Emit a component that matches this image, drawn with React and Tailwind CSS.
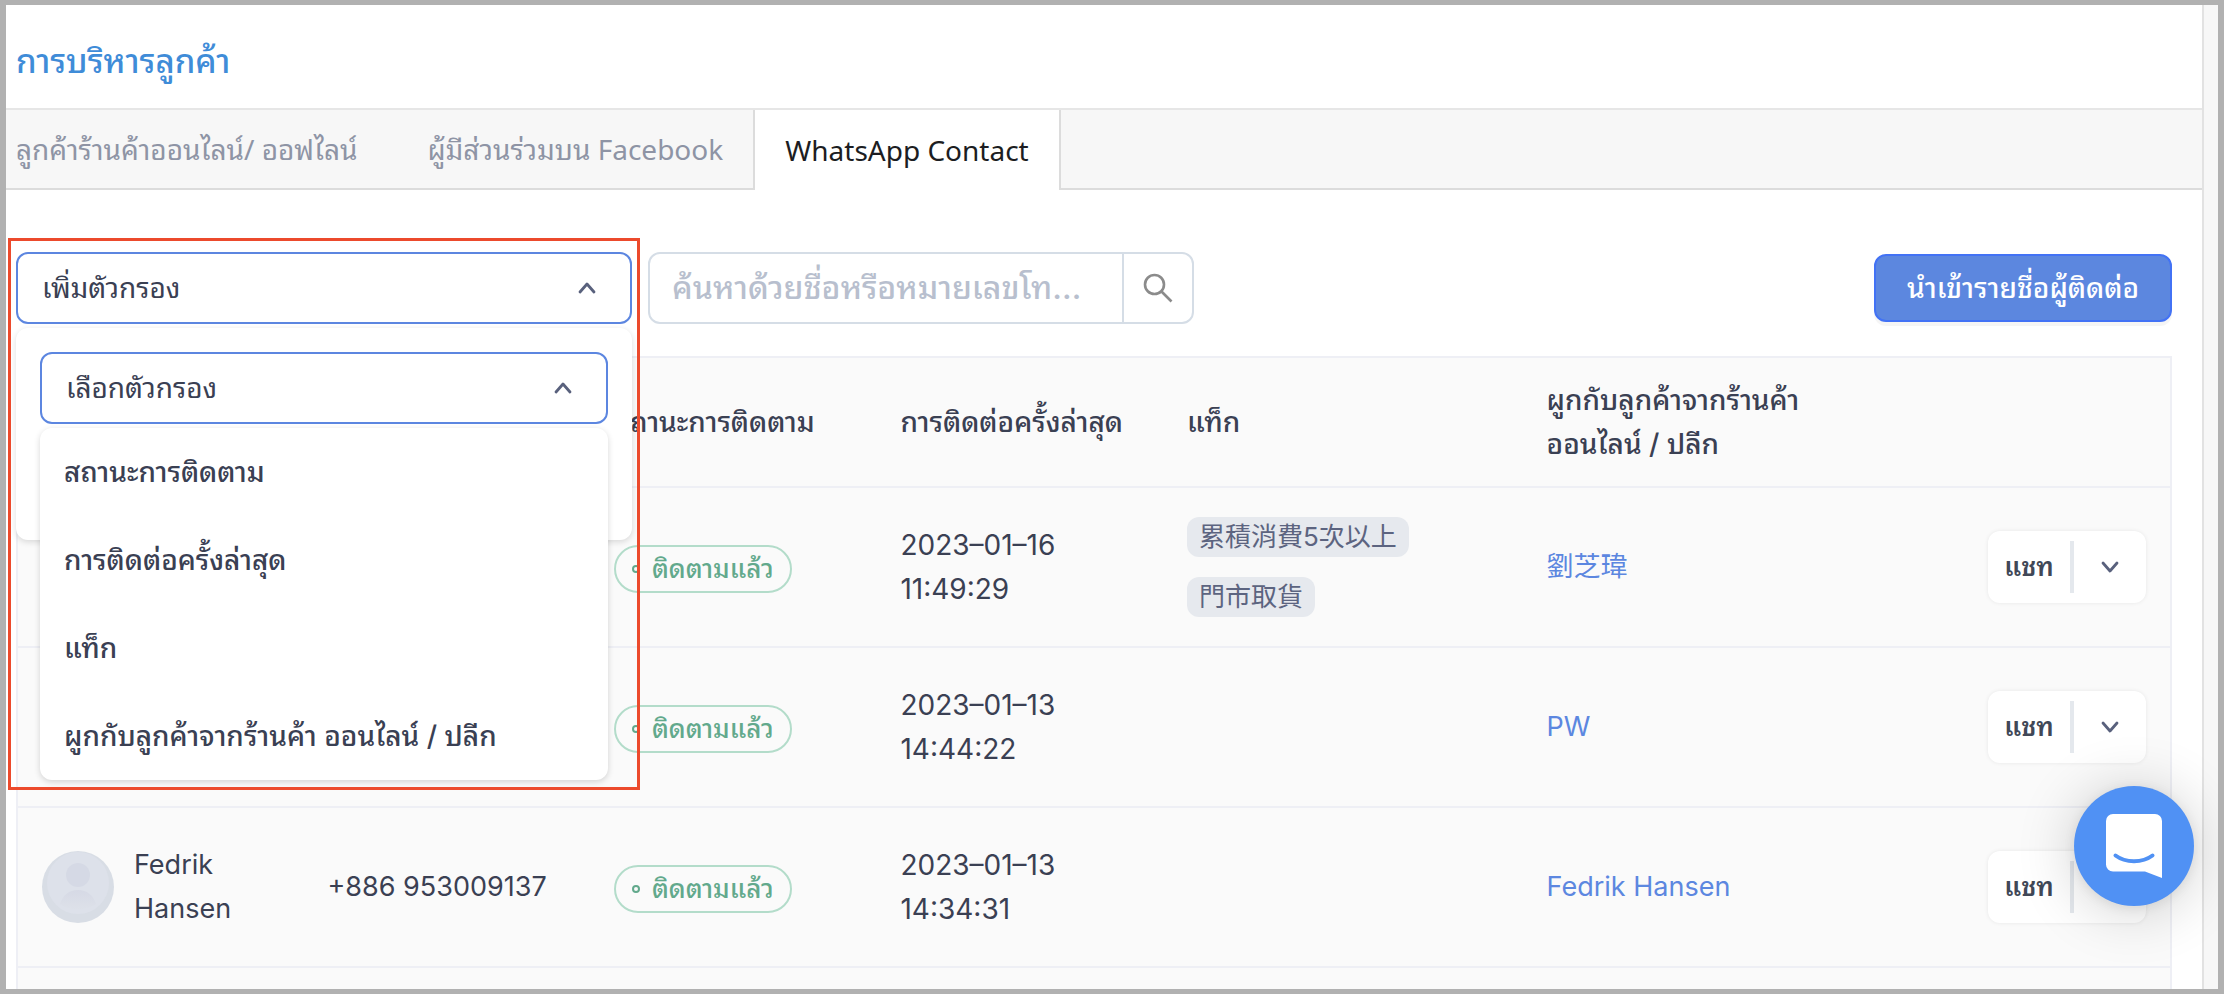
import React from "react";

const tabs = [
  { label: "ลูกค้าร้านค้าออนไลน์/ ออฟไลน์" },
  { label: "ผู้มีส่วนร่วมบน Facebook" },
  { label: "WhatsApp Contact", active: true },
];

const filterOptions = [
  "สถานะการติดตาม",
  "การติดต่อครั้งล่าสุด",
  "แท็ก",
  "ผูกกับลูกค้าจากร้านค้า ออนไลน์ / ปลีก",
];

const contacts = [
  { id: 1, date: "2023–01–16", time: "11:49:29", tags: ["累積消費5次以上", "門市取貨"], link: "劉芝瑋" },
  { id: 2, date: "2023–01–13", time: "14:44:22", tags: [], link: "PW" },
  { id: 3, name: "Fedrik Hansen", phone: "+886 953009137", date: "2023–01–13", time: "14:34:31", tags: [], link: "Fedrik Hansen" },
];

function Chevron({ up }) {
  return (
    <svg viewBox="0 0 18 12" className="h-3 w-[18px] shrink-0" fill="none" stroke="#59617d" strokeWidth="2.8" strokeLinecap="round" strokeLinejoin="round" aria-hidden="true">
      <path d={up ? "M2 10l7-8 7 8" : "M2 2l7 8 7-8"} />
    </svg>
  );
}

function SelectBox({ label }) {
  return (
    <button type="button" aria-haspopup="listbox" aria-expanded="true" className="flex h-[72px] w-full items-center justify-between rounded-xl border-2 border-[#5c86e0] bg-white pl-6 pr-[34px] text-left">
      <span>{label}</span>
      <Chevron up />
    </button>
  );
}

function Avatar() {
  return (
    <svg viewBox="0 0 72 72" className="size-[72px] shrink-0" aria-hidden="true">
      <defs>
        <linearGradient id="avatar-body" x1="0" y1="0" x2="0" y2="1">
          <stop offset="0" stopColor="#d6d9e5" />
          <stop offset="1" stopColor="#dde1e9" />
        </linearGradient>
      </defs>
      <circle cx="36" cy="36" r="36" fill="#d8dde5" />
      <circle cx="36" cy="32" r="31" fill="#dde1ea" />
      <circle cx="36" cy="24" r="12" fill="#d5d9e5" />
      <path d="M18 53c3-9 9-14 18-14s15 5 18 14c-9 7-27 7-36 0Z" fill="url(#avatar-body)" />
    </svg>
  );
}

function StatusPill() {
  return (
    <span className="inline-flex h-12 items-center gap-3 rounded-full border-2 border-[#b3dcca] px-4 text-[26px] font-medium text-[#62a98c]">
      <span className="size-2 rounded-full border-2 border-[#62a98c]" />
      ติดตามแล้ว
    </span>
  );
}

function ChatButton() {
  return (
    <div className="inline-flex h-[72px] w-[158px] items-center rounded-xl bg-white shadow-[0_0_4px_rgba(0,0,0,0.08)]">
      <button type="button" className="flex-1 text-center text-[26px] font-semibold text-[#414857]">แชท</button>
      <span className="h-[52px] w-1 bg-[#e4e8ed]" />
      <button type="button" aria-label="เพิ่มเติม" className="flex h-full w-[72px] items-center justify-center">
        <Chevron />
      </button>
    </div>
  );
}

export default function App() {
  return (
    <div className="relative flex h-screen overflow-hidden border-x-[6px] border-y-[5px] border-[#b1b1b1] bg-[#f7f7f7] font-['Inter','Noto_Sans_Thai_Looped','Noto_Sans_Thai','Noto_Sans_CJK_TC',sans-serif] text-[28px] leading-[44px] text-[#3a4053]">
      <main className="mr-[14px] flex-1 border-r-2 border-[#e2e2e2] bg-white">
        <header className="flex h-[105px] items-center border-b-2 border-[#e6e6e6] px-[10px] pt-2">
          <h1 className="text-[33px] font-medium text-[#3f8cd8]">การบริหารลูกค้า</h1>
        </header>

        <nav className="flex h-20 bg-[#f7f7f7] font-['Noto_Sans','Noto_Sans_Thai_Looped','Noto_Sans_Thai',sans-serif]">
          {tabs.map((tab) =>
            tab.active ? (
              <a key={tab.label} href="#" aria-current="page" className="flex items-center border-x-2 border-[#dcdcdc] bg-white px-[30px] text-[#1c1d22]">{tab.label}</a>
            ) : (
              <a key={tab.label} href="#" className="flex items-center border-b-2 border-[#dcdcdc] pl-[10px] pr-[30px] text-[#8e94a5] not-first:pl-10">{tab.label}</a>
            ),
          )}
          <div className="flex-1 border-b-2 border-[#dcdcdc]" />
        </nav>

        <section className="pl-[10px] pr-[30px] pt-[62px]">
          <div className="flex items-center gap-4">
            <div className="relative w-[616px]">
              <SelectBox label="เพิ่มตัวกรอง" />
              <div className="absolute left-0 top-full z-10 mt-1 h-[212px] w-full rounded-xl bg-white px-6 pt-6 shadow-[0_2px_6px_rgba(0,0,0,0.14)]">
                <SelectBox label="เลือกตัวกรอง" />
                <ul role="listbox" className="relative mt-1 rounded-xl bg-white font-medium shadow-[0_2px_6px_rgba(0,0,0,0.16)]">
                  {filterOptions.map((option) => (
                    <li key={option} role="option" aria-selected="false" className="flex h-[88px] items-center px-6">{option}</li>
                  ))}
                </ul>
              </div>
              <div className="pointer-events-none absolute -left-2 -top-[14px] z-20 h-[552px] w-[632px] border-3 border-[#ec4a2c]" />
            </div>

            <form className="flex h-[72px] w-[546px] overflow-hidden rounded-xl border-2 border-[#d5dde6]">
              <input type="text" aria-label="ค้นหา" placeholder="ค้นหาด้วยชื่อหรือหมายเลขโทรศัพท์" className="min-w-0 flex-1 text-ellipsis pl-[22px] pr-8 text-[32px] font-medium outline-none placeholder:text-[#b8bfce]" />
              <button type="button" aria-label="ค้นหา" className="flex w-[70px] items-center justify-center border-l-2 border-[#d5dde6]">
                <svg viewBox="0 0 30 30" className="size-[30px]" fill="none" stroke="#8b8b8b" strokeWidth="2.6" aria-hidden="true">
                  <circle cx="11.5" cy="11.5" r="9.5" />
                  <path d="m18.500 18.500 10 10" />
                </svg>
              </button>
            </form>

            <button type="button" className="ml-auto h-[68px] w-[298px] rounded-xl border-2 border-[#4272f5] bg-[#5c87df] text-center font-medium text-white shadow-[0_4px_0_rgba(0,0,0,0.04)]">นำเข้ารายชื่อผู้ติดต่อ</button>
          </div>

          <table className="mt-8 w-full table-fixed border-collapse border-2 border-[#eeeff5] bg-[#fafafa] text-left">
            <colgroup>
              <col className="w-[13.3%]" />
              <col className="w-[13.3%]" />
              <col className="w-[13.3%]" />
              <col className="w-[13.3%]" />
              <col className="w-[16.7%]" />
              <col className="w-[16.7%]" />
              <col />
            </colgroup>
            <thead>
              <tr className="h-[130px] border-b-2 border-[#eeeff5]">
                <th />
                <th />
                <th className="px-6 font-medium">สถานะการติดตาม</th>
                <th className="whitespace-nowrap px-6 font-medium">การติดต่อครั้งล่าสุด</th>
                <th className="px-6 font-medium">แท็ก</th>
                <th className="px-6 font-medium">ผูกกับลูกค้าจากร้านค้า<br />ออนไลน์ / ปลีก</th>
                <th />
              </tr>
            </thead>
            <tbody>
              {contacts.map((c) => (
                <tr key={c.id} className="h-40 border-b-2 border-[#eeeff5]">
                  <td className="px-6 text-[27px]">
                    {c.name && (
                      <div className="flex items-center gap-5">
                        <Avatar />
                        <span>{c.name}</span>
                      </div>
                    )}
                  </td>
                  <td className="whitespace-nowrap px-6 text-[27px]">{c.phone}</td>
                  <td className="px-6 pt-1"><div className="flex"><StatusPill /></div></td>
                  <td className="px-6">{c.date}<br />{c.time}</td>
                  <td className="px-6">
                    <div className="flex flex-col items-start gap-5">
                      {c.tags.map((tag) => (
                        <span key={tag} className="flex h-10 items-center rounded-xl bg-[#e6e9ee] px-3 text-[26px] text-[#5c6480]">{tag}</span>
                      ))}
                    </div>
                  </td>
                  <td className="px-6 text-[27px]"><a href="#" className="text-[#5c87e0]">{c.link}</a></td>
                  <td className="pr-6"><div className="flex justify-end"><ChatButton /></div></td>
                </tr>
              ))}
              <tr className="h-40"><td colSpan={7} /></tr>
            </tbody>
          </table>
        </section>
      </main>

      <button type="button" aria-label="แชทสด" className="absolute bottom-[83px] right-6 z-30 flex size-[120px] items-center justify-center rounded-full bg-[#5091f4] shadow-[0_4px_60px_rgba(0,0,0,0.2),0_2px_12px_rgba(0,0,0,0.08)]">
        <svg viewBox="0 0 56 64" className="h-16 w-14" aria-hidden="true">
          <path d="M7 0h42a7 7 0 0 1 7 7v57l-17-6.500H7a7 7 0 0 1-7-7V7a7 7 0 0 1 7-7Z" fill="#fff" />
          <path d="M9.500 41.500c10 7.500 27 7.500 37 0" fill="none" stroke="#5091f4" strokeWidth="4" strokeLinecap="round" />
        </svg>
      </button>
    </div>
  );
}
